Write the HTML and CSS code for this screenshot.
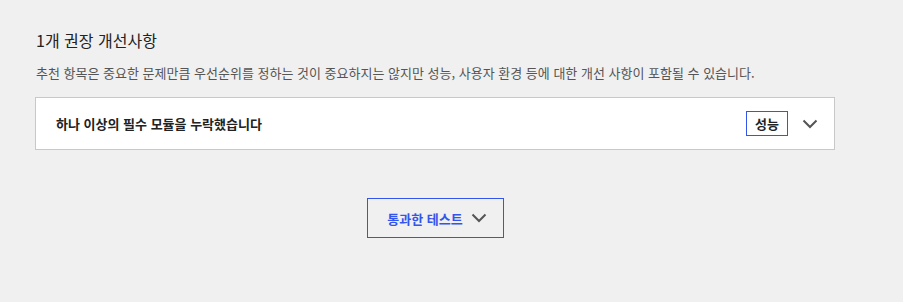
FILE: index.html
```html
<!DOCTYPE html>
<html lang="ko">
<head>
<meta charset="utf-8">
<link rel="stylesheet" href="styles.css">
</head>
<body>
<section class="recs">
  <h2 class="recs-title">1개 권장 개선사항</h2>
  <p class="recs-desc">추천 항목은 중요한 문제만큼 우선순위를 정하는 것이 중요하지는 않지만 성능, 사용자 환경 등에 대한 개선 사항이 포함될 수 있습니다.</p>
  <div class="card">
    <span class="card-title">하나 이상의 필수 모듈을 누락했습니다</span>
    <span class="badge">성능</span>
    <svg class="chev" width="16" height="10" viewBox="0 0 16 10"><path d="M1.5 1.5 L8 8 L14.5 1.5" fill="none" stroke="#555" stroke-width="2"/></svg>
  </div>
  <div class="more-wrap">
    <button class="more">통과한 테스트
      <svg class="chev" width="16" height="10" viewBox="0 0 16 10"><path d="M1.5 1.5 L8 8 L14.5 1.5" fill="none" stroke="#555" stroke-width="2"/></svg>
    </button>
  </div>
</section>
</body>
</html>
```
FILE: styles.css
```css
html, body {
  margin: 0;
  padding: 0;
  background: #f0f0f0;
}
body {
  font-family: "Noto Sans CJK KR", "Noto Sans", sans-serif;
  color: #222;
}
.recs {
  padding: 28px 0 0 35px;
  width: 800px;
}
.recs-title {
  margin: 0 0 0 1px;
  font-size: 16px;
  font-weight: 400;
  line-height: 24px;
  color: #222;
}
.recs-desc {
  margin: 12px 0 0 1px;
  font-size: 13px;
  line-height: 18px;
  color: #555;
}
.card {
  margin-top: 15px;
  height: 51px;
  background: #fff;
  border: 1px solid #c8c8c8;
  display: flex;
  align-items: center;
  padding: 0 16px 0 20px;
}
.card-title {
  font-size: 13px;
  font-weight: 700;
  flex: 1;
  color: #222;
}
.badge {
  width: 40px;
  height: 23px;
  border: 1px solid #3355ee;
  display: flex;
  align-items: center;
  justify-content: center;
  font-size: 13px;
  font-weight: 700;
  color: #222;
  margin-right: 14px;
}
.card .chev {
  margin-top: 1px;
}
.more-wrap {
  display: flex;
  justify-content: center;
  margin-top: 48px;
}
.more {
  width: 137px;
  height: 40px;
  background: transparent;
  border: 1px solid #3355ee;
  color: #3355ee;
  font-family: "Noto Sans CJK KR", "Noto Sans", sans-serif;
  font-size: 13px;
  font-weight: 700;
  display: flex;
  align-items: center;
  justify-content: center;
  gap: 8px;
  padding: 0 0 0 4px;
  margin-left: 0;
}
```
